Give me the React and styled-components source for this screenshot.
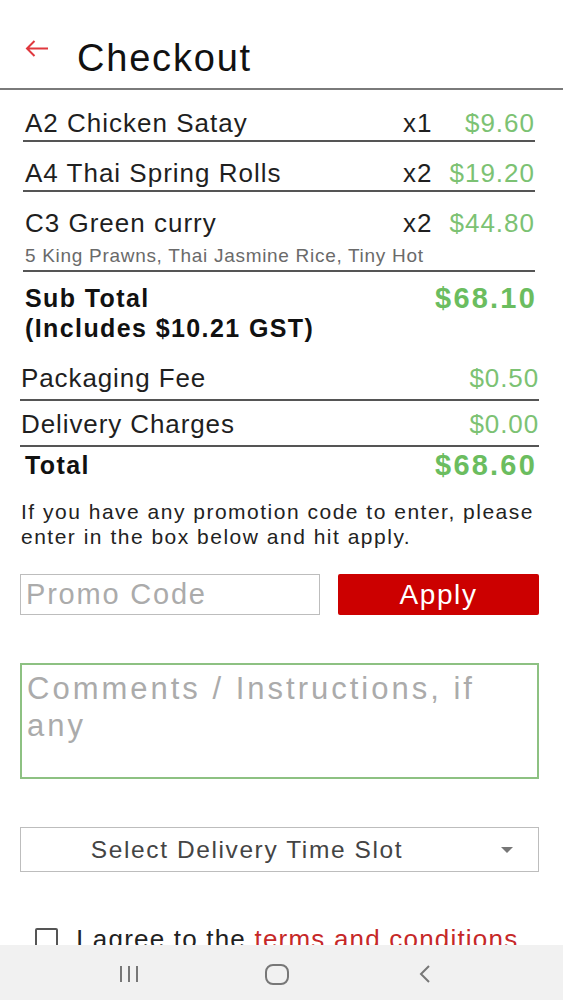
import React from "react";
import styled, { createGlobalStyle } from "styled-components";

const GlobalStyle = createGlobalStyle`
  html, body {
    margin: 0;
    padding: 0;
    background: #fff;
    font-family: "Liberation Sans", Arial, sans-serif;
    color: #1c1c1c;
  }
  * {
    box-sizing: border-box;
  }
`;

const Screen = styled.div`
  width: 563px;
  height: 1000px;
  display: flex;
  flex-direction: column;
  overflow: hidden;
`;

const Content = styled.div`
  flex: 1;
  overflow: hidden;
`;

const Header = styled.div`
  height: 90px;
  display: flex;
  align-items: flex-start;
  padding: 37px 0 0 25px;
  border-bottom: 2px solid #7a7a7a;
`;

const BackButton = styled.button`
  border: none;
  background: none;
  padding: 0;
  margin: 3px 28px 0 0;
  display: flex;
  cursor: pointer;
`;

const Title = styled.h1`
  margin: 0;
  font-size: 38px;
  font-weight: 400;
  letter-spacing: 1.8px;
  color: #111;
`;

const ItemList = styled.div`
  margin: 0 28px 0 23px;
  padding-top: 2px;
`;

const ItemRow = styled.div`
  padding: 16px 0 ${(p) => (p.$hasNote ? "0" : "2px")} 2px;
  border-bottom: 2px solid #555;
`;

const ItemLine = styled.div`
  display: grid;
  grid-template-columns: 1fr 40px 92px;
  font-size: 26px;
  line-height: 30px;
  letter-spacing: 1px;
  color: #1f1f1f;
`;

const Price = styled.span`
  text-align: right;
  color: #7cc273;
`;

const ItemNote = styled.div`
  margin-top: 3px;
  font-size: 19px;
  line-height: 29px;
  letter-spacing: 0.7px;
  color: #6a6a6a;
`;

const SubTotal = styled.div`
  margin: 0 28px 0 25px;
  padding-top: 11px;
  display: flex;
  justify-content: space-between;
  align-items: flex-start;
`;

const BoldLabel = styled.div`
  font-size: 25px;
  line-height: 30px;
  font-weight: 700;
  letter-spacing: 1.4px;
  color: #111;
`;

const BigPrice = styled.div`
  font-size: 29px;
  line-height: 30px;
  font-weight: 700;
  letter-spacing: 2.2px;
  margin-right: -2px;
  color: #6bbd5f;
`;

const Charges = styled.div`
  margin: 12px 24px 0 20px;
`;

const ChargeRow = styled.div`
  display: flex;
  justify-content: space-between;
  padding: 8px 0 6px 1px;
  font-size: 26px;
  line-height: 30px;
  letter-spacing: 0.9px;
  color: #1f1f1f;
  border-bottom: 2px solid #555;
`;

const ChargeValue = styled.span`
  color: #7cc273;
`;

const TotalRow = styled.div`
  margin: 0 28px 0 25px;
  padding-top: 3px;
  display: flex;
  justify-content: space-between;
  align-items: flex-start;
`;

const PromoNote = styled.p`
  margin: 19px 20px 0 21px;
  font-size: 21px;
  line-height: 25px;
  letter-spacing: 1.5px;
  color: #222;
`;

const PromoRow = styled.div`
  margin: 25px 24px 0 20px;
  display: flex;
  gap: 18px;
  height: 41px;
`;

const PromoInput = styled.input`
  width: 300px;
  height: 100%;
  border: 1.5px solid #bdbdbd;
  padding: 0 5px;
  font-family: inherit;
  font-size: 29px;
  letter-spacing: 1.8px;
  outline: none;
  &::placeholder {
    color: #ababab;
  }
`;

const ApplyButton = styled.button`
  flex: 1;
  border: none;
  border-radius: 2px;
  background: #cc0000;
  color: #fff;
  font-family: inherit;
  font-size: 28px;
  letter-spacing: 1.6px;
  cursor: pointer;
`;

const Comments = styled.textarea`
  display: block;
  margin: 48px 24px 0 20px;
  width: 519px;
  height: 116px;
  border: 2px solid #8dc182;
  padding: 5px 5px;
  resize: none;
  font-family: inherit;
  font-size: 31px;
  line-height: 37px;
  letter-spacing: 3px;
  outline: none;
  &::placeholder {
    color: #ababab;
  }
`;

const SelectBox = styled.div`
  margin: 48px 24px 0 20px;
  height: 45px;
  border: 1.5px solid #bdbdbd;
  display: flex;
  align-items: center;
  padding-right: 25px;
`;

const SelectLabel = styled.span`
  flex: 1;
  text-align: center;
  font-size: 24.5px;
  letter-spacing: 1.6px;
  color: #444;
  padding-right: 8px;
`;

const Caret = styled.span`
  width: 0;
  height: 0;
  margin-left: 20px;
  border-left: 6px solid transparent;
  border-right: 6px solid transparent;
  border-top: 6px solid #777;
`;

const AgreeRow = styled.label`
  margin: 52px 0 0 35px;
  display: flex;
  align-items: center;
  gap: 18px;
  font-size: 26px;
  letter-spacing: 1.2px;
  color: #222;
`;

const CheckBox = styled.span`
  width: 23px;
  height: 23px;
  border: 2px solid #555;
  border-radius: 2px;
`;

const TermsLink = styled.span`
  color: #c62828;
`;

const NavBar = styled.div`
  height: 55px;
  background: #f1f1f1;
  display: flex;
  align-items: center;
  justify-content: center;
  gap: 118px;
  padding: 3px 10px 0 0;
`;

const NavButton = styled.div`
  width: 30px;
  display: flex;
  justify-content: center;
`;

const items = [
  { name: "A2 Chicken Satay", qty: 1, price: "$9.60" },
  { name: "A4 Thai Spring Rolls", qty: 2, price: "$19.20" },
  {
    name: "C3 Green curry",
    qty: 2,
    price: "$44.80",
    note: "5 King Prawns, Thai Jasmine Rice, Tiny Hot",
  },
];

const BackArrow = () => (
  <svg width="24" height="17" viewBox="0 0 24 17">
    <path
      d="M23 8.5H2M9.5 1L2 8.5L9.5 16"
      fill="none"
      stroke="#e0383e"
      strokeWidth="2"
    />
  </svg>
);

export default function App() {
  return (
    <Screen>
      <GlobalStyle />
      <Content>
        <Header>
          <BackButton aria-label="Back">
            <BackArrow />
          </BackButton>
          <Title>Checkout</Title>
        </Header>

        <ItemList>
          {items.map((item) => (
            <ItemRow key={item.name} $hasNote={!!item.note}>
              <ItemLine>
                <span>{item.name}</span>
                <span>x{item.qty}</span>
                <Price>{item.price}</Price>
              </ItemLine>
              {item.note && <ItemNote>{item.note}</ItemNote>}
            </ItemRow>
          ))}
        </ItemList>

        <SubTotal>
          <BoldLabel>
            Sub Total
            <br />
            (Includes $10.21 GST)
          </BoldLabel>
          <BigPrice>$68.10</BigPrice>
        </SubTotal>

        <Charges>
          <ChargeRow>
            <span>Packaging Fee</span>
            <ChargeValue>$0.50</ChargeValue>
          </ChargeRow>
          <ChargeRow>
            <span>Delivery Charges</span>
            <ChargeValue>$0.00</ChargeValue>
          </ChargeRow>
        </Charges>

        <TotalRow>
          <BoldLabel>Total</BoldLabel>
          <BigPrice>$68.60</BigPrice>
        </TotalRow>

        <PromoNote>
          If you have any promotion code to enter, please enter in the box
          below and hit apply.
        </PromoNote>

        <PromoRow>
          <PromoInput placeholder="Promo Code" />
          <ApplyButton>Apply</ApplyButton>
        </PromoRow>

        <Comments placeholder="Comments / Instructions, if any" />

        <SelectBox>
          <SelectLabel>Select Delivery Time Slot</SelectLabel>
          <Caret />
        </SelectBox>

        <AgreeRow>
          <CheckBox />
          <span>
            I agree to the <TermsLink>terms and conditions</TermsLink>
          </span>
        </AgreeRow>
      </Content>

      <NavBar>
        <NavButton>
          <svg width="20" height="18" viewBox="0 0 20 18">
            <path d="M2 1v16M10 1v16M18 1v16" stroke="#777" strokeWidth="2" />
          </svg>
        </NavButton>
        <NavButton>
          <svg width="24" height="21" viewBox="0 0 24 21">
            <rect x="1" y="1" width="22" height="19" rx="7" fill="none" stroke="#777" strokeWidth="2" />
          </svg>
        </NavButton>
        <NavButton>
          <svg width="14" height="20" viewBox="0 0 14 20">
            <path d="M11 2L3 10L11 18" fill="none" stroke="#777" strokeWidth="2" />
          </svg>
        </NavButton>
      </NavBar>
    </Screen>
  );
}
